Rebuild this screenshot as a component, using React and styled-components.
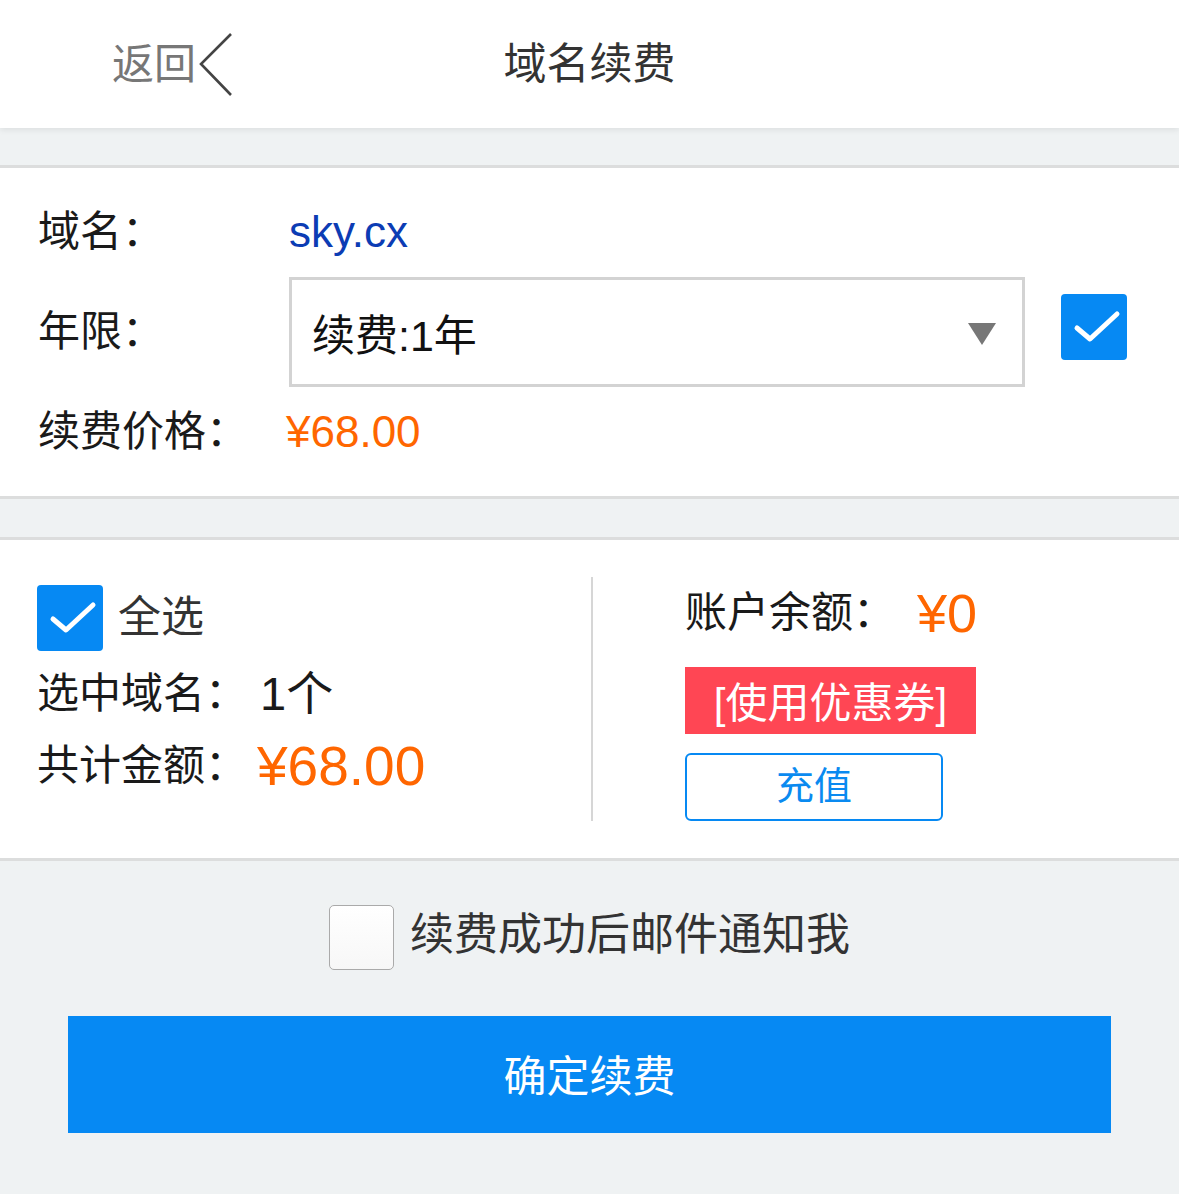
import React from "react";
import styled, { createGlobalStyle } from "styled-components";

const GlobalStyle = createGlobalStyle`
  html, body {
    margin: 0;
    padding: 0;
    background: #eff2f3;
  }
  body {
    font-family: "Liberation Sans", "Noto Sans CJK SC", sans-serif;
    -webkit-font-smoothing: antialiased;
  }
  * { box-sizing: border-box; }
`;

const Page = styled.div`
  width: 1179px;
  min-height: 1194px;
  background: #eff2f3;
  display: flex;
  flex-direction: column;
`;

const Header = styled.header`
  height: 128px;
  background: #fff;
  display: grid;
  grid-template-columns: 1fr auto 1fr;
  align-items: center;
  box-shadow: 0 2px 6px rgba(0, 0, 0, 0.08);
  position: relative;
  z-index: 1;
`;

const Back = styled.a`
  display: flex;
  align-items: center;
  gap: 3px;
  padding-left: 112px;
  color: #777;
  font-size: 42px;
  line-height: 1;
  text-decoration: none;
  margin-top: 2px;
`;

const Title = styled.h1`
  margin: 0;
  font-size: 43px;
  font-weight: normal;
  color: #333;
  line-height: 1;
`;

const Section = styled.section`
  background: #fff;
  border-top: 3px solid #dcdddd;
  border-bottom: 3px solid #dcdddd;
  margin-top: ${(p) => p.$gap}px;
`;

const InfoGrid = styled.div`
  display: grid;
  grid-template-columns: 251px 736px 36px 66px;
  row-gap: 11px;
  padding: 30px 0 30px 38px;
  align-items: center;
`;

const Label = styled.div`
  grid-column: 1;
  font-size: 42px;
  color: #1a1a1a;
  line-height: 68px;
`;

const Value = styled.div`
  grid-column: 2 / span 3;
  font-size: ${(p) => p.$size || 42}px;
  color: ${(p) => p.$color || "#1a1a1a"};
  line-height: 68px;
  margin-left: ${(p) => p.$shift || 0}px;
`;

const Select = styled.div`
  grid-column: 2;
  height: 110px;
  border: 3px solid #d3d3d3;
  display: flex;
  align-items: center;
  justify-content: space-between;
  padding: 0 26px 0 20px;
  font-size: 43px;
  color: #111;
`;

const Caret = styled.span`
  width: 0;
  height: 0;
  border-left: 14px solid transparent;
  border-right: 14px solid transparent;
  border-top: 22px solid #777;
  margin-top: 4px;
`;

const CheckBox = styled.span`
  grid-column: 4;
  width: 66px;
  height: 66px;
  border-radius: 4px;
  display: inline-flex;
  flex: none;
  background: #0689f3;
  margin-top: ${(p) => p.$offset || 0}px;
`;

const Summary = styled.div`
  display: flex;
  padding: 37px 0 37px 37px;
`;

const LeftCol = styled.div`
  width: 556px;
  border-right: 2px solid #d6d6d6;
  display: flex;
  flex-direction: column;
  padding-top: 7px;
`;

const RightCol = styled.div`
  display: flex;
  flex-direction: column;
  align-items: flex-start;
  padding-left: 92px;
`;

const Line = styled.div`
  display: flex;
  align-items: center;
  font-size: 42px;
  color: #1a1a1a;
  line-height: ${(p) => p.$lh || 64}px;
  margin-top: ${(p) => p.$mt || 0}px;
  gap: ${(p) => p.$gap || 0}px;
`;

const Muted = styled.span`
  color: #333;
  font-size: 43px;
`;

const Amount = styled.span`
  color: #ff6600;
  font-size: ${(p) => p.$size}px;
  margin-left: ${(p) => p.$ml || 0}px;
`;

const Count = styled.span`
  font-size: 47px;
  margin-left: ${(p) => p.$ml || 0}px;
`;

const Coupon = styled.div`
  margin-top: 22px;
  height: 67px;
  width: 291px;
  background: #ff4654;
  color: #fff;
  font-size: 42px;
  display: flex;
  align-items: center;
  justify-content: center;
  padding-bottom: 2px;
`;

const Recharge = styled.button`
  margin-top: 19px;
  width: 258px;
  height: 68px;
  border: 2px solid #0689f3;
  border-radius: 6px;
  background: #fff;
  color: #0a8af0;
  font-family: inherit;
  font-size: 38px;
  padding: 0 0 10px;
  display: flex;
  align-items: center;
  justify-content: center;
`;

const Footer = styled.div`
  display: flex;
  flex-direction: column;
  align-items: center;
  padding-top: 44px;
`;

const Notify = styled.label`
  display: flex;
  align-items: center;
  gap: 16px;
  font-size: 44px;
  color: #333;
  line-height: 65px;
`;

const NotifyText = styled.span`
  margin-top: -6px;
`;

const NotifyBox = styled.span`
  width: 65px;
  height: 65px;
  border-radius: 5px;
  border: 1px solid #aaa;
  background: linear-gradient(#fff, #f7f7f7);
  flex: none;
`;

const Confirm = styled.button`
  margin-top: 46px;
  width: 1043px;
  height: 117px;
  border: none;
  background: #0689f3;
  color: #fff;
  font-family: inherit;
  font-size: 43px;
  padding: 0 0 4px;
`;

const Check = () => (
  <svg width="66" height="66" viewBox="0 0 66 66">
    <polyline
      points="16,34 29,45 56,20"
      fill="none"
      stroke="#fff"
      strokeWidth="5"
      strokeLinecap="round"
      strokeLinejoin="round"
    />
  </svg>
);

const Chevron = () => (
  <svg width="34" height="64" viewBox="0 0 34 64">
    <polyline
      points="32,1 2,31 32,62"
      fill="none"
      stroke="#444"
      strokeWidth="2.6"
    />
  </svg>
);

export default function App() {
  return (
    <Page>
      <GlobalStyle />
      <Header>
        <Back href="#">
          返回
          <Chevron />
        </Back>
        <Title>域名续费</Title>
        <span />
      </Header>

      <Section $gap={37}>
        <InfoGrid>
          <Label>域名：</Label>
          <Value $color="#0c3cb4" $size={44}>sky.cx</Value>
          <Label>年限：</Label>
          <Select>
            <span>续费:1年</span>
            <Caret />
          </Select>
          <CheckBox $offset={-10}>
            <Check />
          </CheckBox>
          <Label>续费价格：</Label>
          <Value $color="#ff6600" $size={44} $shift={-3}>
            ¥68.00
          </Value>
        </InfoGrid>
      </Section>

      <Section $gap={38}>
        <Summary>
          <LeftCol>
            <Line $lh={67} $gap={15}>
              <CheckBox>
                <Check />
              </CheckBox>
              <Muted>全选</Muted>
            </Line>
            <Line $mt={11}>
              选中域名：<Count $ml={13}>1个</Count>
            </Line>
            <Line $mt={8}>
              共计金额：<Amount $size={55} $ml={10}>¥68.00</Amount>
            </Line>
          </LeftCol>
          <RightCol>
            <Line $mt={4}>
              账户余额：<Amount $size={54} $ml={22}>¥0</Amount>
            </Line>
            <Coupon>[使用优惠券]</Coupon>
            <Recharge>充值</Recharge>
          </RightCol>
        </Summary>
      </Section>

      <Footer>
        <Notify>
          <NotifyBox />
          <NotifyText>续费成功后邮件通知我</NotifyText>
        </Notify>
        <Confirm>确定续费</Confirm>
      </Footer>
    </Page>
  );
}
